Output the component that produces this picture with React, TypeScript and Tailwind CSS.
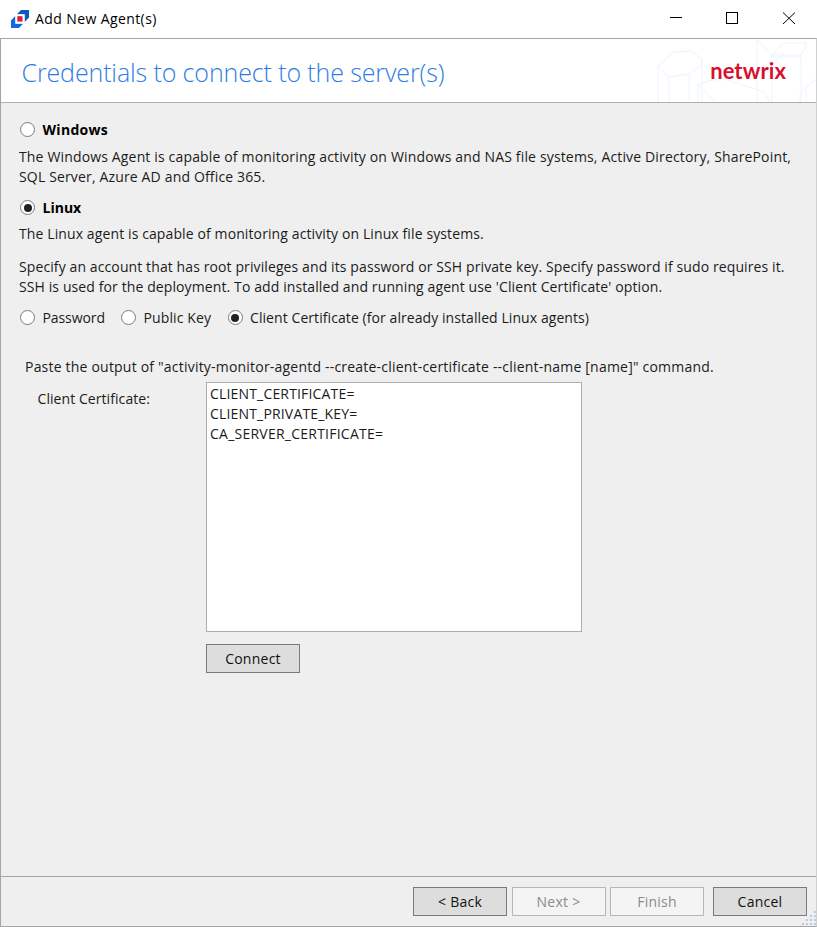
import type { ReactNode } from "react";

function Radio({ checked = false, bold = false, children }: { checked?: boolean; bold?: boolean; children: ReactNode }) {
  return (
    <label className="flex h-5 items-center gap-[7.5px]">
      <span className="mb-px flex size-[15px] shrink-0 items-center justify-center rounded-full border border-[#7c7c7c] bg-white">
        {checked && <span className="size-[8px] rounded-full bg-[#212121]" />}
      </span>
      <span className={bold ? "font-bold text-black" : ""}>{children}</span>
    </label>
  );
}

function Button({ disabled = false, children }: { disabled?: boolean; children: ReactNode }) {
  return (
    <button
      disabled={disabled}
      className={
        "flex h-[29px] w-[94px] items-center justify-center border " +
        (disabled ? "border-[#b5b8ba] bg-[#f4f4f4] text-[#8a8a8a]" : "border-[#7a7a7a] bg-[#dddddd] text-[#111]")
      }
    >
      {children}
    </button>
  );
}

function AppIcon() {
  return (
    <svg width="18" height="18" viewBox="0 0 18 18">
      <path d="M6 4.300 10 0H18V7.500L13.700 12V4.300Z" fill="#1057c4" />
      <path d="M12 13.700 8 18H0V10.500L4.300 6V13.700Z" fill="#0d6ae4" />
      <rect x="4.600" y="4.600" width="8.800" height="8.800" fill="#fff" />
      <rect x="6.300" y="6.200" width="5.200" height="5.400" fill="#dc1f35" />
    </svg>
  );
}

function BannerArt() {
  return (
    <svg className="absolute right-0 top-0" width="160" height="63" viewBox="0 0 160 63" fill="none" stroke="#edf3fc" strokeWidth="1">
      <path d="M2 27 17 13 35 12 46 20V63M46 20 46 26 33 35 13 38 2 27V63M13 38V63M33 35V63" />
      <path d="M42 45 65 39 108 53 114 63M42 45V63M42 45 60 63M65 39 60 44" />
      <path d="M101 63V0L116 16 127 4H151L145 16 116 16V63M145 16V63M116 16 116 18 146 18M119 22 128 14M160 40 144 54V63M150 63V49" />
    </svg>
  );
}

export default function App() {
  return (
    <div className="flex h-[927px] w-[817px] flex-col bg-white font-['Open_Sans','Noto_Sans',sans-serif] text-[14px] leading-5 whitespace-nowrap text-[#1b1b1b]">
      <header className="flex h-[38px] shrink-0 items-center">
        <div className="ml-[11px]">
          <AppIcon />
        </div>
        <h1 className="ml-[6px] tracking-[0.4px] text-black">Add New Agent(s)</h1>
        <svg className="ml-auto" width="147" height="38" viewBox="0 0 147 38" fill="none" stroke="#000" strokeWidth="1" shapeRendering="crispEdges">
          <path d="M0 17.500H12" />
          <rect x="56.500" y="12.500" width="11" height="11" />
          <path d="M113 12.500 125 24M125 12.500 113 24" shapeRendering="auto" />
        </svg>
      </header>

      <main className="flex min-h-0 flex-1 flex-col border border-[#a5a5a5] border-r-[#d0d0d0] bg-[#efefef]">
        <section className="relative flex h-[64px] shrink-0 items-center border-b border-[#b0b0b0] bg-white">
          <BannerArt />
          <h2 className="relative mb-[-3px] ml-[20.5px] text-[25px] leading-8 font-light tracking-[-0.12px] text-[#2f7de1]">
            Credentials to connect to the server(s)
          </h2>
          <span className="relative mr-[30px] ml-auto font-['Lato',sans-serif] text-[22px] leading-6 font-bold tracking-[0.1px] text-[#d8102e]">
            netwrix
          </span>
        </section>

        <section className="flex flex-1 flex-col pt-[17px] pl-[18px]">
          <div className="ml-px tracking-[0.3px]">
            <Radio bold>Windows</Radio>
          </div>
          <p className="mt-[7px] tracking-[0.155px]">
            The Windows Agent is capable of monitoring activity on Windows and NAS file systems, Active Directory, SharePoint,
            <br />
            SQL Server, Azure AD and Office 365.
          </p>
          <div className="mt-[11px] ml-px">
            <Radio bold checked>
              Linux
            </Radio>
          </div>
          <p className="mt-[6px] tracking-[0.11px]">The Linux agent is capable of monitoring activity on Linux file systems.</p>
          <p className="mt-[13px] tracking-[0.105px]">
            Specify an account that has root privileges and its password or SSH private key. Specify password if sudo requires it.
            <br />
            SSH is used for the deployment. To add installed and running agent use 'Client Certificate' option.
          </p>
          <div className="mt-[11px] ml-px flex">
            <div className="w-[101px] tracking-[-0.09px]">
              <Radio>Password</Radio>
            </div>
            <div className="w-[106.5px] tracking-[0.12px]">
              <Radio>Public Key</Radio>
            </div>
            <div className="tracking-[0.075px]">
              <Radio checked>Client Certificate (for already installed Linux agents)</Radio>
            </div>
          </div>
          <p className="mt-[29px] ml-[6px] tracking-[0.205px]">
            Paste the output of "activity-monitor-agentd --create-client-certificate --client-name [name]" command.
          </p>
          <div className="mt-[5px] ml-[18.5px] flex">
            <span className="mt-[7px] w-[168.5px] tracking-[0.07px]">Client Certificate:</span>
            <div>
              <div className="h-[250px] w-[375.5px] border border-[#abadb3] bg-white pt-px pl-[3px]">
                <div className="tracking-[0.17px]">CLIENT_CERTIFICATE=</div>
                <div className="tracking-[0.17px]">CLIENT_PRIVATE_KEY=</div>
                <div className="tracking-[0.24px]">CA_SERVER_CERTIFICATE=</div>
              </div>
              <div className="mt-[12px] tracking-[0.25px]">
                <Button>Connect</Button>
              </div>
            </div>
          </div>
        </section>

        <footer className="relative flex h-[50px] shrink-0 items-center border-t border-[#a5a5a5] pl-[412px] tracking-[0.25px]">
          <Button>&lt; Back</Button>
          <div className="ml-[4.5px]">
            <Button disabled>Next &gt;</Button>
          </div>
          <div className="ml-[4.5px]">
            <Button disabled>Finish</Button>
          </div>
          <div className="ml-[9px]">
            <Button>Cancel</Button>
          </div>
          <svg className="absolute right-0 bottom-px" width="14" height="14" viewBox="0 0 14 14" fill="#b9c9e3" shapeRendering="crispEdges">
            <path d="M12 0h2v2h-2zM12 4h2v2h-2zM8 4h2v2h-2zM12 8h2v2h-2zM8 8h2v2h-2zM4 8h2v2h-2zM12 12h2v2h-2zM8 12h2v2h-2zM4 12h2v2h-2zM0 12h2v2h-2z" />
          </svg>
        </footer>
      </main>
    </div>
  );
}
